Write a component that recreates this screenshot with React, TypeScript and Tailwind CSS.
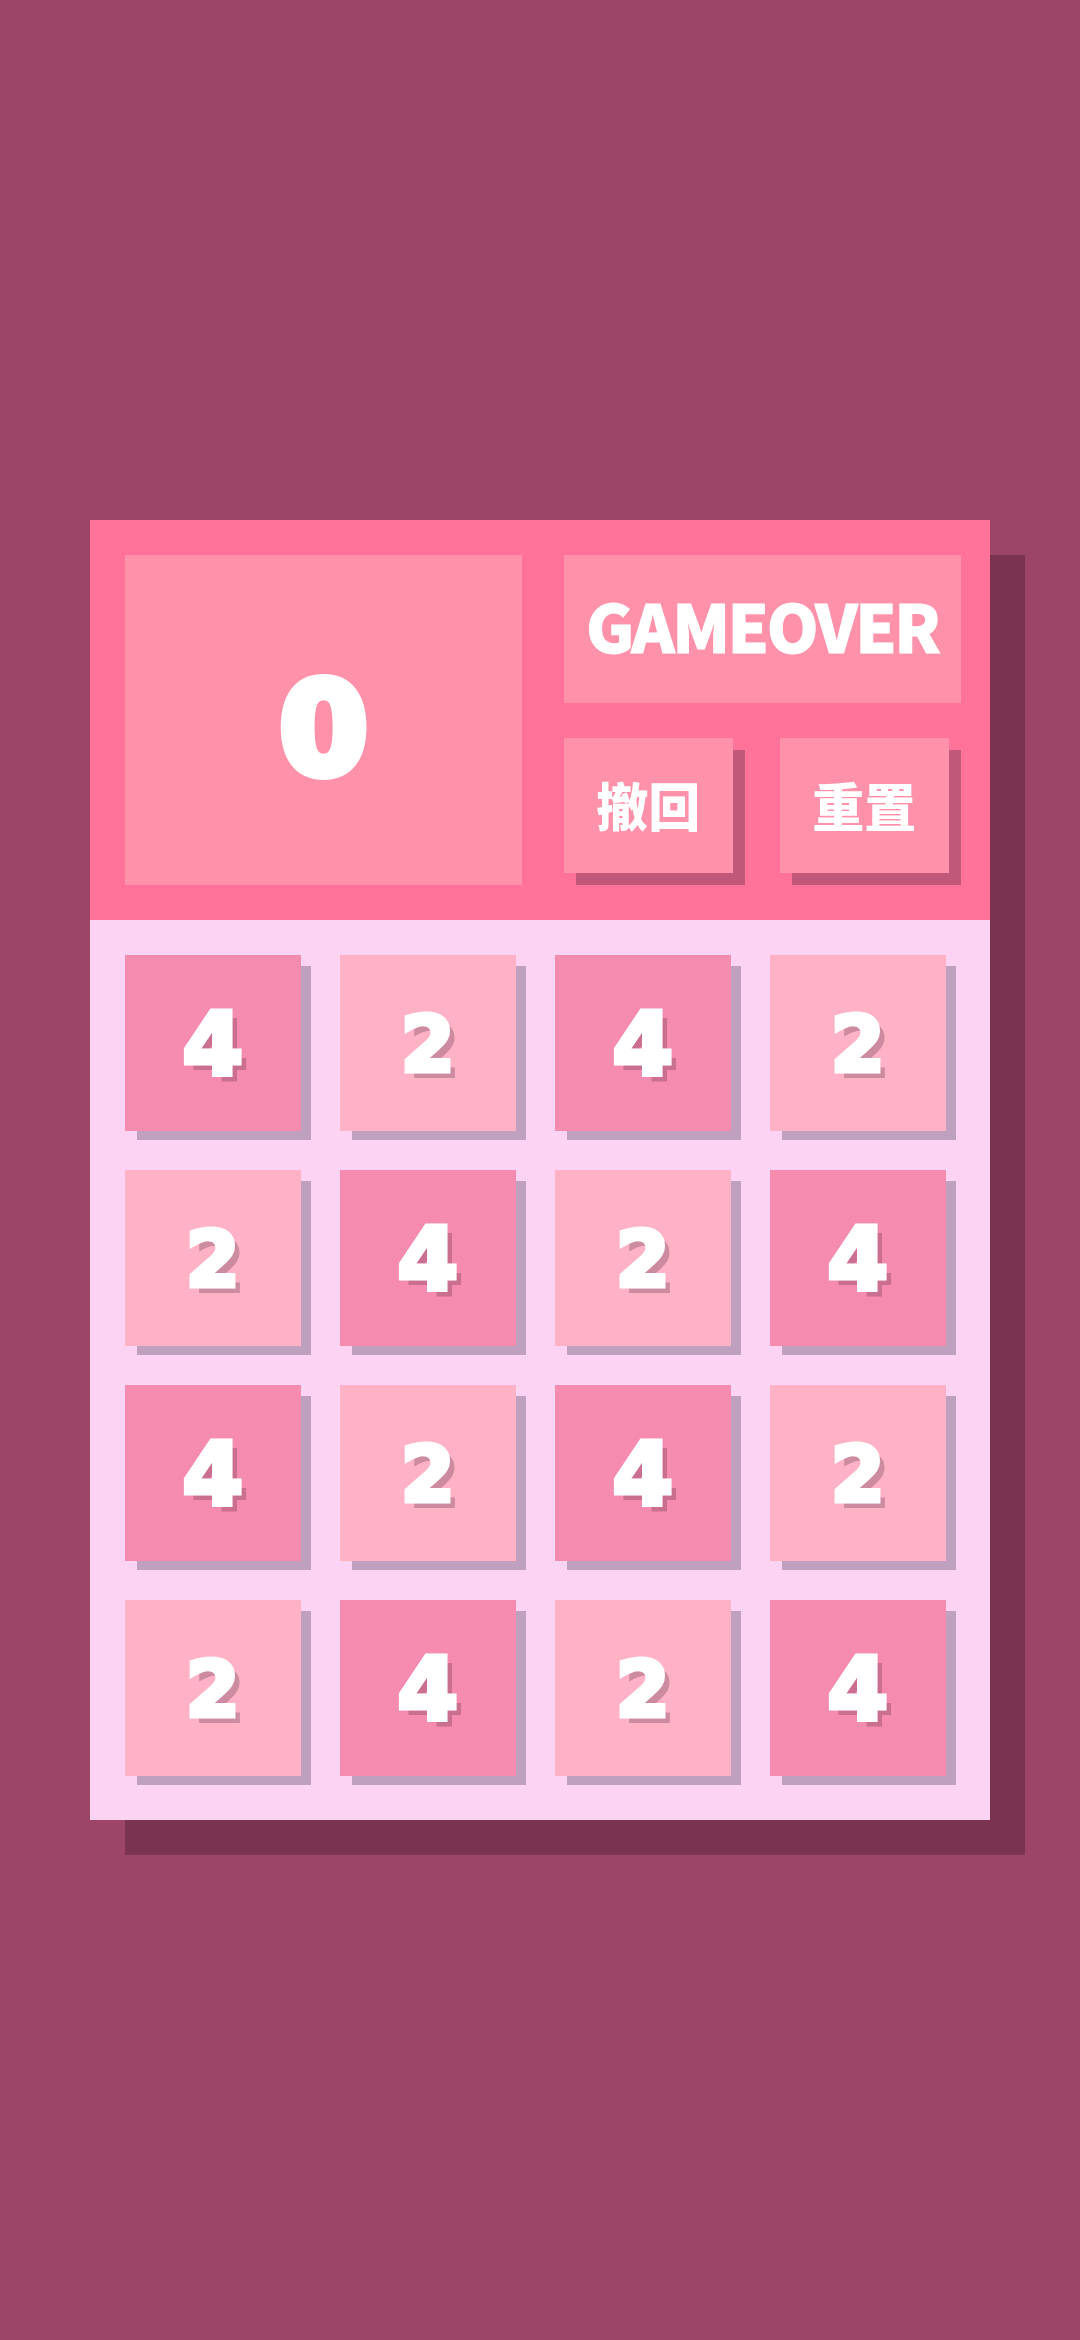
const cells = [4, 2, 4, 2, 2, 4, 2, 4, 4, 2, 4, 2, 2, 4, 2, 4];

function Tile({ value }: { value: number }) {
  const isFour = value === 4;
  return (
    <div
      className={`flex h-[175.5px] w-[175.5px] items-center justify-center shadow-[11px_10px_0_-1px_#bfa0bf] ${
        isFour ? "bg-[#f68bb0]" : "bg-[#ffb1c5]"
      }`}
    >
      <span
        className={`font-['DejaVu_Sans',sans-serif] leading-none font-bold text-white [-webkit-text-stroke:5px_#fff] ${
          isFour
            ? "mt-[6px] text-[87px] [text-shadow:7px_7px_0_#cb6f90]"
            : "mt-[4px] text-[77px] [text-shadow:7px_7px_0_#cd8ba0]"
        }`}
      >
        {value}
      </span>
    </div>
  );
}

function ActionButton({ label }: { label: string }) {
  return (
    <button className="flex h-[135px] w-[169.5px] items-center justify-center bg-[#ff91ab] shadow-[12px_12px_0_0_#c05879]">
      <span className="-mt-[2px] font-['Noto_Sans_CJK_SC',sans-serif] text-[52px] leading-none font-black text-white">
        {label}
      </span>
    </button>
  );
}

export default function App() {
  return (
    <div className="flex h-screen items-center justify-center bg-[#9c4566]">
      <div className="w-[900px] shadow-[35px_35px_0_0_#7a3450]">
        <div className="flex gap-[41.5px] bg-[#ff7299] py-[35px] pr-[29px] pl-[35px]">
          <div className="flex h-[330px] w-[397px] items-center justify-center bg-[#ff91ab]">
            <span className="mt-[20px] font-['DejaVu_Sans',sans-serif] text-[126px] leading-none font-bold text-white [-webkit-text-stroke:10px_#fff]">
              0
            </span>
          </div>
          <div className="flex w-[397.5px] flex-col gap-[35px]">
            <div className="flex h-[148px] items-center justify-center bg-[#ff91ab]">
              <span className="-mt-[10px] font-['Noto_Sans_CJK_SC',sans-serif] text-[66px] leading-none font-black tracking-[-2.5px] text-white [-webkit-text-stroke:1px_#fff]">
                GAMEOVER
              </span>
            </div>
            <div className="flex justify-between pr-[12px]">
              <ActionButton label="撤回" />
              <ActionButton label="重置" />
            </div>
          </div>
        </div>
        <div className="grid grid-cols-[repeat(4,175.5px)] gap-[39.5px] bg-[#fdd3f3] pt-[35px] pb-[44.5px] pl-[35px]">
          {cells.map((value, i) => (
            <Tile key={i} value={value} />
          ))}
        </div>
      </div>
    </div>
  );
}
